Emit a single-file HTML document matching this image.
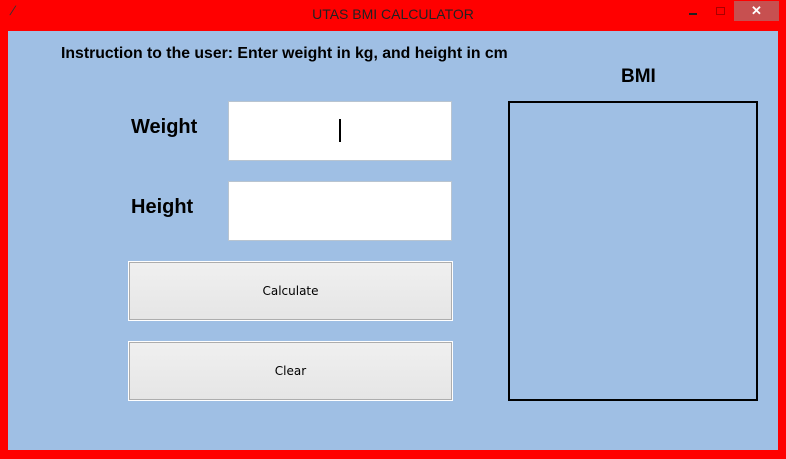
<!DOCTYPE html>
<html><head><style>
body{margin:0;width:786px;height:459px;background:#f00;position:relative;overflow:hidden;font-family:"Liberation Sans",sans-serif}
.a{position:absolute}
.main{left:8px;top:31px;width:770px;height:419px;background:#9fbfe4}
.inp{background:#fff;border:1px solid #b8c4d0;box-sizing:border-box;width:224px;height:60px}
.btn{box-sizing:border-box;width:325px;height:60px;border:1px solid #fff;outline:1px solid #adadad;outline-offset:-2px;background:linear-gradient(#f0f0f0,#e5e5e5);display:flex;align-items:center;justify-content:center;font-size:12px;font-family:"DejaVu Sans",sans-serif;color:#000}
.lbl{font-weight:bold;font-size:20px}
</style></head><body>
<div class="a" style="left:11px;top:3px;font-size:13px;color:#333;transform:skewX(-20deg)">/</div>
<div class="a" style="left:0;width:786px;top:6px;text-align:center;font-size:14px;color:#222">UTAS BMI CALCULATOR</div>
<div class="a" style="left:689px;top:13px;width:8px;height:2px;background:#222"></div>
<div class="a" style="left:716px;top:7px;width:7px;height:6px;border:1px solid #a00"></div>
<div class="a" style="left:734px;top:1px;width:45px;height:20px;background:#c75050;color:#fff;text-align:center;font-size:13px;line-height:20px;font-weight:bold">✕</div>
<div class="a main"></div>
<div class="a" style="left:61px;top:45px;font-size:15.8px;font-weight:bold">Instruction to the user: Enter weight in kg, and height in cm</div>
<div class="a lbl" style="left:131px;top:116px">Weight</div>
<div class="a lbl" style="left:131px;top:196px">Height</div>
<div class="a inp" style="left:228px;top:101px"></div>
<div class="a" style="left:339px;top:119px;width:2px;height:23px;background:#000"></div>
<div class="a inp" style="left:228px;top:181px"></div>
<div class="a btn" style="left:128px;top:261px">Calculate</div>
<div class="a btn" style="left:128px;top:341px">Clear</div>
<div class="a lbl" style="left:621px;top:66px;font-size:19px">BMI</div>
<div class="a" style="left:508px;top:101px;width:250px;height:300px;border:2px solid #000;box-sizing:border-box"></div>
</body></html>
